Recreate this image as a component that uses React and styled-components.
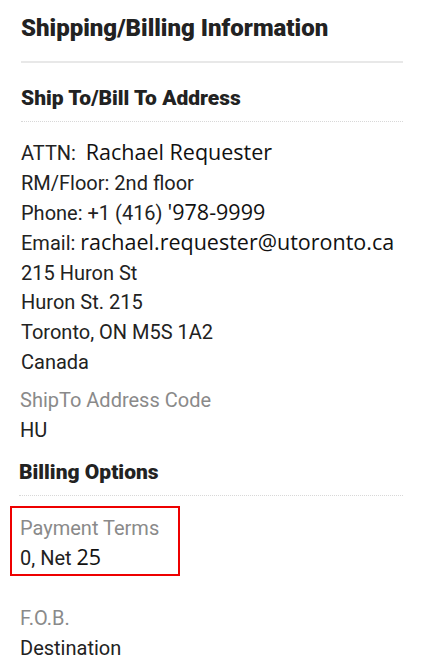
import React from 'react';
import styled, { createGlobalStyle } from 'styled-components';

const GlobalStyle = createGlobalStyle`
  body {
    margin: 0;
    background: #fff;
    font-family: Roboto, "Liberation Sans", sans-serif;
    color: #222;
  }
`;

const Panel = styled.div`
  width: 382px;
  padding: 13px 0 0 21px;
`;

const Title = styled.h2`
  margin: 0;
  font-size: 24px;
  font-weight: 900;
  line-height: 30px;
  padding-bottom: 18px;
  border-bottom: 2px solid #e8e8e8;
`;

const SubTitle = styled.h3`
  margin: ${(p) => p.$top || 18}px 0 0 ${(p) => p.$shift || 0}px;
  font-size: 21px;
  font-weight: 900;
  line-height: 28px;
  padding-bottom: 9px;
  border-bottom: 1px dotted #d8d8d8;
`;

const Lines = styled.div`
  margin-top: 17px;
  font-size: 20px;
  line-height: 29.9px;
`;

const Line = styled.div`
  white-space: nowrap;
  height: 29.9px;
`;

const Alt = styled.span`
  font-family: "Open Sans", "Noto Sans", sans-serif;
  font-size: 21.5px;
  line-height: 20px;
  color: #111;
`;

const Field = styled.div`
  display: inline-block;
  margin: ${(p) => p.$top || 0}px 0 0 ${(p) => (p.$boxed ? -11 : -1)}px;
  padding: ${(p) => (p.$boxed ? '6px 19px 1px 8px' : '0')};
  border: ${(p) => (p.$boxed ? '2px solid #ee0000' : 'none')};
  font-size: 20px;
  line-height: 29.5px;
`;

const Label = styled.div`
  color: #8a8a8a;
`;

const Value = styled.div`
  color: #222;
  height: 29.5px;
`;

const Block = styled.div``;

export default function App() {
  return (
    <>
      <GlobalStyle />
      <Panel>
        <Title>Shipping/Billing Information</Title>
        <SubTitle $top={21}>Ship To/Bill To Address</SubTitle>
        <Lines>
          <Line>
            ATTN:&nbsp; <Alt>Rachael Requester</Alt>
          </Line>
          <Line>RM/Floor: 2nd floor</Line>
          <Line>
            Phone: +1 (416) <Alt>'978-9999</Alt>
          </Line>
          <Line>
            Email: <Alt>rachael.requester@utoronto.ca</Alt>
          </Line>
          <Line>215 Huron St</Line>
          <Line>Huron St. 215</Line>
          <Line>Toronto, ON M5S 1A2</Line>
          <Line>Canada</Line>
        </Lines>
        <Block>
          <Field $top={8}>
            <Label>ShipTo Address Code</Label>
            <Value>HU</Value>
          </Field>
        </Block>
        <SubTitle $top={13} $shift={-2}>Billing Options</SubTitle>
        <Block>
          <Field $boxed $top={10}>
            <Label>Payment Terms</Label>
            <Value>
              0, Net <Alt>25</Alt>
            </Value>
          </Field>
        </Block>
        <Block>
          <Field $top={28}>
            <Label>F.O.B.</Label>
            <Value>Destination</Value>
          </Field>
        </Block>
      </Panel>
    </>
  );
}
